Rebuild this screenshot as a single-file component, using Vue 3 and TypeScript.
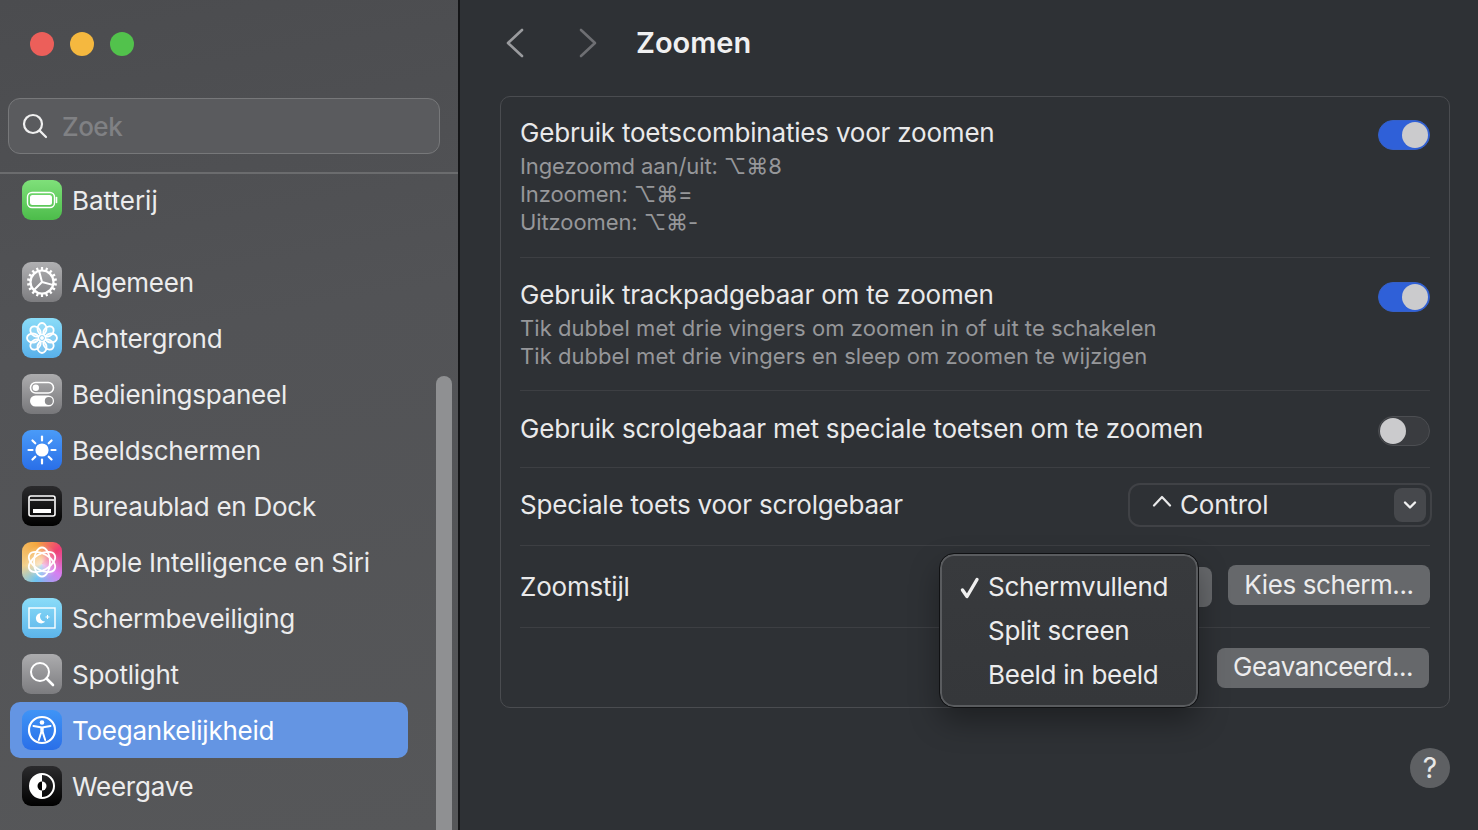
<script setup lang="ts">
interface Item { id: string; label: string; active?: boolean; spaced?: boolean }
const items: Item[] = [
  { id: 'battery', label: 'Batterij', spaced: true },
  { id: 'general', label: 'Algemeen' },
  { id: 'wallpaper', label: 'Achtergrond' },
  { id: 'control', label: 'Bedieningspaneel' },
  { id: 'displays', label: 'Beeldschermen' },
  { id: 'dock', label: 'Bureaublad en Dock' },
  { id: 'siri', label: 'Apple Intelligence en Siri' },
  { id: 'saver', label: 'Schermbeveiliging' },
  { id: 'spotlight', label: 'Spotlight' },
  { id: 'access', label: 'Toegankelijkheid', active: true },
  { id: 'appearance', label: 'Weergave' },
]
const petals = [0, 45, 90, 135, 180, 225, 270, 315]
const rays = [0, 45, 90, 135, 180, 225, 270, 315]
const teeth = Array.from({ length: 18 }, (_, i) => i * 20)
const menu = ['Schermvullend', 'Split screen', 'Beeld in beeld']
</script>

<template>
  <div class="window">
    <aside class="sidebar">
      <div class="lights">
        <span class="light red"></span>
        <span class="light yellow"></span>
        <span class="light green"></span>
      </div>
      <div class="search">
        <svg class="search-icon" width="28" height="28" viewBox="0 0 28 28" fill="none" stroke="#f0f0f0" stroke-width="2.2" stroke-linecap="round">
          <circle cx="12" cy="12" r="9" />
          <path d="M18.6 18.6 25 25" />
        </svg>
        <span class="search-text">Zoek</span>
      </div>
      <div class="list">
        <div v-for="item in items" :key="item.id" class="row" :class="{ active: item.active, spaced: item.spaced }">
          <span class="icon" :class="'i-' + item.id">
            <svg width="40" height="40" viewBox="0 0 40 40" fill="none">
              <template v-if="item.id === 'battery'">
                <rect x="5.500" y="12.500" width="27" height="15" rx="4.500" stroke="#fff" stroke-width="1.4" />
                <rect x="8" y="15" width="22" height="10" rx="2.500" fill="#fff" />
                <path d="M34.500 17.500v5" stroke="#fff" stroke-width="1.6" stroke-linecap="round" />
              </template>
              <template v-else-if="item.id === 'general'">
                <circle cx="20" cy="20" r="11.500" stroke="#fff" stroke-width="2.2" />
                <path v-for="t in teeth" :key="t" d="M20 5v4" stroke="#fff" stroke-width="2.2" :transform="`rotate(${t} 20 20)`" />
                <g transform="rotate(-15 20 20)">
                  <path d="M20 20V9M20 20 10.500 25.500M20 20l9.500 5.500" stroke="#fff" stroke-width="2" />
                </g>
              </template>
              <template v-else-if="item.id === 'wallpaper'">
                <ellipse v-for="p in petals" :key="p" cx="20" cy="10.800" rx="4.500" ry="5.800" stroke="#fff" stroke-width="1.800" fill="#ffffff30" :transform="`rotate(${p} 20 20)`" />
                <circle cx="20" cy="20" r="2" fill="#fff" />
              </template>
              <template v-else-if="item.id === 'control'">
                <rect x="8.500" y="8.500" width="23" height="10.500" rx="5.200" stroke="#fff" stroke-width="1.600" />
                <circle cx="13.800" cy="13.700" r="3.200" fill="#fff" />
                <rect x="8" y="21.500" width="24" height="11" rx="5.500" fill="#fff" />
                <circle cx="26.800" cy="27" r="4" fill="#8b8b8d" />
              </template>
              <template v-else-if="item.id === 'displays'">
                <circle cx="20" cy="20" r="6.600" fill="#fff" />
                <path v-for="r in rays" :key="r" d="M20 6.500v4" stroke="#fff" stroke-width="2.200" stroke-linecap="round" :transform="`rotate(${r} 20 20)`" />
              </template>
              <template v-else-if="item.id === 'dock'">
                <rect x="7" y="10" width="26" height="20" rx="2" stroke="#fff" stroke-width="1.600" />
                <path d="M8 14h24" stroke="#fff" stroke-width="1.400" />
                <rect x="11" y="23" width="18" height="4" fill="#fff" />
              </template>
              <template v-else-if="item.id === 'siri'">
                <ellipse cx="20" cy="20" rx="14.500" ry="8" stroke="#fff" stroke-width="1.800" transform="rotate(30 20 20)" />
                <ellipse cx="20" cy="20" rx="14.500" ry="8" stroke="#fff" stroke-width="1.800" transform="rotate(90 20 20)" />
                <ellipse cx="20" cy="20" rx="14.500" ry="8" stroke="#fff" stroke-width="1.800" transform="rotate(150 20 20)" />
              </template>
              <template v-else-if="item.id === 'saver'">
                <rect x="7" y="10" width="26" height="20" stroke="#fff" stroke-width="1.400" />
                <path d="M19.500 15a5.200 5.200 0 1 0 3.600 8.500 5 5 0 0 1-3.600-8.500Z" fill="#fff" />
                <path d="M25.500 17v4M23.500 19h4" stroke="#fff" stroke-width="1.100" />
              </template>
              <template v-else-if="item.id === 'spotlight'">
                <circle cx="18" cy="18" r="9" stroke="#fff" stroke-width="2" />
                <path d="M24.500 24.500 31 31" stroke="#fff" stroke-width="2.600" stroke-linecap="round" />
              </template>
              <template v-else-if="item.id === 'access'">
                <circle cx="20" cy="20" r="13" stroke="#fff" stroke-width="2.200" />
                <circle cx="20" cy="12.500" r="2.300" fill="#fff" />
                <path d="M11.500 16 20 17.500 28.500 16" stroke="#fff" stroke-width="2" stroke-linecap="round" stroke-linejoin="round" />
                <path d="M20 17.500v6" stroke="#fff" stroke-width="3.400" />
                <path d="M19 23 16.800 30M21 23 23.200 30" stroke="#fff" stroke-width="2" stroke-linecap="round" />
              </template>
              <template v-else-if="item.id === 'appearance'">
                <circle cx="20" cy="20" r="12" stroke="#fff" stroke-width="2" />
                <path d="M20 8a12 12 0 0 0 0 24Z" fill="#fff" />
                <path d="M20 15.500a4.500 4.500 0 0 0 0 9Z" fill="#000" />
                <path d="M20 15.500a4.500 4.500 0 0 1 0 9Z" fill="#fff" />
              </template>
            </svg>
          </span>
          <span class="label">{{ item.label }}</span>
        </div>
      </div>
      <div class="scrollbar"></div>
    </aside>

    <main class="main">
      <header class="top">
        <svg class="chev back" width="20" height="30" viewBox="0 0 20 30" fill="none" stroke="#9a9b9e" stroke-width="2.600" stroke-linecap="round" stroke-linejoin="round">
          <path d="M17 2 3 15l14 13" />
        </svg>
        <svg class="chev forward" width="20" height="30" viewBox="0 0 20 30" fill="none" stroke="#6e6f73" stroke-width="2.600" stroke-linecap="round" stroke-linejoin="round">
          <path d="M3 2l14 13L3 28" />
        </svg>
        <h1 class="title">Zoomen</h1>
      </header>

      <section class="panel">
        <div class="set first">
          <div class="texts">
            <div class="name">Gebruik toetscombinaties voor zoomen</div>
            <div class="sub narrow">Ingezoomd aan/uit: ⌥⌘8</div>
            <div class="sub narrow">Inzoomen: ⌥⌘=</div>
            <div class="sub narrow">Uitzoomen: ⌥⌘-</div>
          </div>
          <span class="toggle on"><i></i></span>
        </div>
        <div class="set second">
          <div class="texts">
            <div class="name">Gebruik trackpadgebaar om te zoomen</div>
            <div class="sub wide">Tik dubbel met drie vingers om zoomen in of uit te schakelen</div>
            <div class="sub wide">Tik dubbel met drie vingers en sleep om zoomen te wijzigen</div>
          </div>
          <span class="toggle on"><i></i></span>
        </div>
        <div class="set third">
          <div class="name">Gebruik scrolgebaar met speciale toetsen om te zoomen</div>
          <span class="toggle"><i></i></span>
        </div>
        <div class="set fourth">
          <div class="name">Speciale toets voor scrolgebaar</div>
          <div class="select">
            <span class="select-label">
              <svg class="ctrl" width="20" height="12" viewBox="0 0 20 12" fill="none" stroke="#e9e9ea" stroke-width="2.200" stroke-linecap="round" stroke-linejoin="round">
                <path d="M2 10.500 10 2l8 8.500" />
              </svg>
              <span>Control</span>
            </span>
            <span class="select-btn">
              <svg width="14" height="10" viewBox="0 0 14 10" fill="none" stroke="#f0f0f0" stroke-width="2.400" stroke-linecap="round" stroke-linejoin="round">
                <path d="M2 2.500 7 7.500l5-5" />
              </svg>
            </span>
          </div>
        </div>
        <div class="set fifth">
          <div class="name">Zoomstijl</div>
          <div class="style-actions">
            <span class="hidden-btn"></span>
            <button class="btn kies">Kies scherm...</button>
          </div>
        </div>
        <div class="set sixth">
          <button class="btn adv">Geavanceerd...</button>
        </div>

        <div class="popup">
          <div v-for="(m, i) in menu" :key="m" class="pop-item">
            <svg v-if="i === 0" class="check" width="20" height="22" viewBox="0 0 20 22" fill="none" stroke="#efefef" stroke-width="3.400" stroke-linecap="round" stroke-linejoin="round">
              <path d="M2.500 13l4.500 6.500L17 2.500" />
            </svg>
            <span class="pop-text">{{ m }}</span>
          </div>
        </div>
      </section>

      <div class="help-wrap"><span class="help">?</span></div>
    </main>
  </div>
</template>

<style>
html, body { margin: 0; background: #2e3135; overflow: hidden; }
</style>

<style scoped>
.window {
  width: 1478px;
  height: 830px;
  display: flex;
  overflow: hidden;
  font-family: Inter, "DejaVu Sans", sans-serif;
  color: #ececed;
  background: #2e3135;
}
.sidebar {
  position: relative;
  width: 458px;
  flex: none;
  height: 830px;
  overflow: hidden;
  border-right: 2px solid #141517;
  background: linear-gradient(170deg, #4b4c4f 0%, #525356 40%, #565759 100%);
}
.lights {
  display: flex;
  gap: 16px;
  padding: 32px 0 0 30px;
}
.light { width: 24px; height: 24px; border-radius: 50%; }
.red { background: #ec5f5a; }
.yellow { background: #f5b83f; }
.green { background: #52c24c; }
.search {
  margin: 42px 18px 0 8px;
  height: 54px;
  display: flex;
  align-items: center;
  gap: 13px;
  padding-left: 12px;
  border: 1px solid #77787a;
  border-radius: 12px;
  background: #5a5b5e;
}
.search-icon { flex: none; }
.search-text { font-size: 26px; color: #808184; font-weight: 500; letter-spacing: -0.5px; }
.list {
  margin-top: 18px;
  border-top: 2px solid #6b6c6e;
}
.row {
  height: 56px;
  display: flex;
  align-items: center;
  margin: 0 50px 0 10px;
  padding-left: 12px;
  border-radius: 10px;
}
.row.spaced { height: 52px; margin-bottom: 28px; }
.row.spaced .label { letter-spacing: 0; }
.row.active { background: #6495e3; }
.icon {
  width: 40px;
  height: 40px;
  flex: none;
  border-radius: 9px;
  overflow: hidden;
  display: block;
}
.icon svg { display: block; }
.label {
  margin-left: 10px;
  font-size: 26px;
  color: #ececed;
  letter-spacing: -0.25px;
  white-space: nowrap;
}
.active .label { color: #fff; }
.i-battery { background: linear-gradient(#7fe07a, #4cbc4a); }
.i-general { background: linear-gradient(#b0b0b2, #7d7d80); }
.i-wallpaper { background: linear-gradient(#8adcf8, #58b0ea); }
.i-control { background: linear-gradient(#acacae, #77777a); }
.i-displays { background: linear-gradient(#4a9bf8, #2a6fe8); }
.i-dock { background: linear-gradient(#2b2b2d, #000); }
.i-siri {
  background:
    radial-gradient(circle at 50% 50%, rgba(255, 245, 240, 0.75) 0, rgba(255, 245, 240, 0.25) 40%, transparent 62%),
    conic-gradient(from 200deg at 50% 55%, #6cc4f2, #f2d08c 18%, #f5a83f 40%, #ee3f76 58%, #d67ef0 78%, #6cc4f2);
}
.i-saver { background: linear-gradient(#8adcf8, #5cb4ea); }
.i-spotlight { background: linear-gradient(#acacae, #7c7c7f); }
.i-access { background: linear-gradient(#3f94f6, #2a6fe8); }
.i-appearance { background: linear-gradient(#2b2b2d, #000); }
.scrollbar {
  position: absolute;
  left: 436px;
  top: 376px;
  width: 16px;
  height: 470px;
  border-radius: 8px;
  background: #8f9092;
}
.main {
  flex: 1;
  min-width: 0;
  padding: 0 28px 0 40px;
}
.top {
  height: 96px;
  display: flex;
  align-items: flex-start;
  padding-top: 28px;
  box-sizing: border-box;
}
.chev { flex: none; }
.back { margin-left: 5px; }
.forward { margin-left: 53px; }
.title {
  margin: -3px 0 0 38px;
  font-size: 29px;
  line-height: 36px;
  font-weight: 600;
  color: #f0f0f1;
  letter-spacing: 0;
}
.panel {
  position: relative;
  box-sizing: border-box;
  width: 950px;
  height: 612px;
  border: 1px solid #4a4c50;
  border-radius: 10px;
  padding: 0 19px;
}
.set {
  box-sizing: border-box;
  display: flex;
  justify-content: space-between;
  border-bottom: 1px solid #3d3f43;
}
.first { height: 161px; padding-top: 20px; }
.second { height: 133px; padding-top: 21px; }
.third { height: 77px; align-items: center; }
.fourth { height: 78px; align-items: center; padding-bottom: 4px; }
.fifth { height: 82px; align-items: center; }
.sixth { height: 80px; border-bottom: none; align-items: center; justify-content: flex-end; }
.name {
  font-size: 26px;
  line-height: 32px;
  color: #e9e9ea;
  letter-spacing: -0.2px;
  white-space: nowrap;
}
.texts .sub { font-size: 22px; line-height: 28px; color: #96979a; white-space: nowrap; }
.texts .sub.wide { letter-spacing: 0.05px; }
.texts .sub.narrow { letter-spacing: -0.1px; }
.texts .name { margin-bottom: 3px; }
.toggle {
  width: 52px;
  height: 30px;
  flex: none;
  box-sizing: border-box;
  border-radius: 15px;
  padding: 1px;
  display: flex;
  background: #3a3c40;
  border: 1px solid #4c4e52;
  margin-top: 3px;
}
.third .toggle { margin-top: 4px; }
.toggle i {
  width: 26px;
  height: 26px;
  border-radius: 50%;
  background: #cbcbcd;
}
.toggle.on {
  background: #2f60d8;
  border-color: #3560c8;
  justify-content: flex-end;
}
.select {
  box-sizing: border-box;
  width: 304px;
  height: 44px;
  margin-right: -2px;
  display: flex;
  align-items: center;
  justify-content: space-between;
  border: 2px solid #404246;
  border-radius: 12px;
  padding: 0 4px 0 22px;
}
.select-label {
  display: flex;
  align-items: center;
  gap: 8px;
  font-size: 26px;
  color: #e9e9ea;
  letter-spacing: -0.2px;
  white-space: nowrap;
}
.ctrl { flex: none; margin-top: -8px; }
.select-btn {
  width: 32px;
  height: 34px;
  border-radius: 8px;
  background: #46484c;
  display: flex;
  align-items: center;
  justify-content: center;
}
.style-actions { display: flex; align-items: center; gap: 16px; margin-top: -4px; }
.hidden-btn { display: block; width: 60px; height: 40px; border-radius: 8px; background: #66686b; margin-top: 4px; }
.btn {
  height: 40px;
  border: none;
  border-radius: 8px;
  background: #66686b;
  color: #ececed;
  font: inherit;
  font-size: 26px;
  padding: 0;
  white-space: nowrap;
}
.kies { width: 202px; letter-spacing: -0.4px; }
.adv { width: 212px; margin-right: 1px; margin-top: -1px; letter-spacing: -0.45px; padding-bottom: 2px; }
.popup {
  position: absolute;
  left: 439px;
  top: 457px;
  box-sizing: border-box;
  width: 258px;
  height: 153px;
  padding: 9px 0;
  border-radius: 14px;
  background: linear-gradient(180deg, #383a3d, #35373a);
  border: 2px solid #5a5c5f;
  outline: 1px solid #101113;
  box-shadow: 0 14px 30px rgba(0, 0, 0, 0.35);
}
.pop-item {
  position: relative;
  height: 44px;
  line-height: 44px;
  padding-left: 46px;
  font-size: 26px;
  color: #ececed;
  letter-spacing: -0.27px;
  white-space: nowrap;
}
.check { position: absolute; left: 18px; top: 12px; }
.help-wrap {
  display: flex;
  justify-content: flex-end;
  padding-top: 40px;
  width: 950px;
}
.help {
  width: 40px;
  height: 40px;
  border-radius: 50%;
  background: #5e6063;
  color: #e8e8e8;
  font-size: 28px;
  font-weight: 400;
  line-height: 40px;
  text-align: center;
}
</style>
